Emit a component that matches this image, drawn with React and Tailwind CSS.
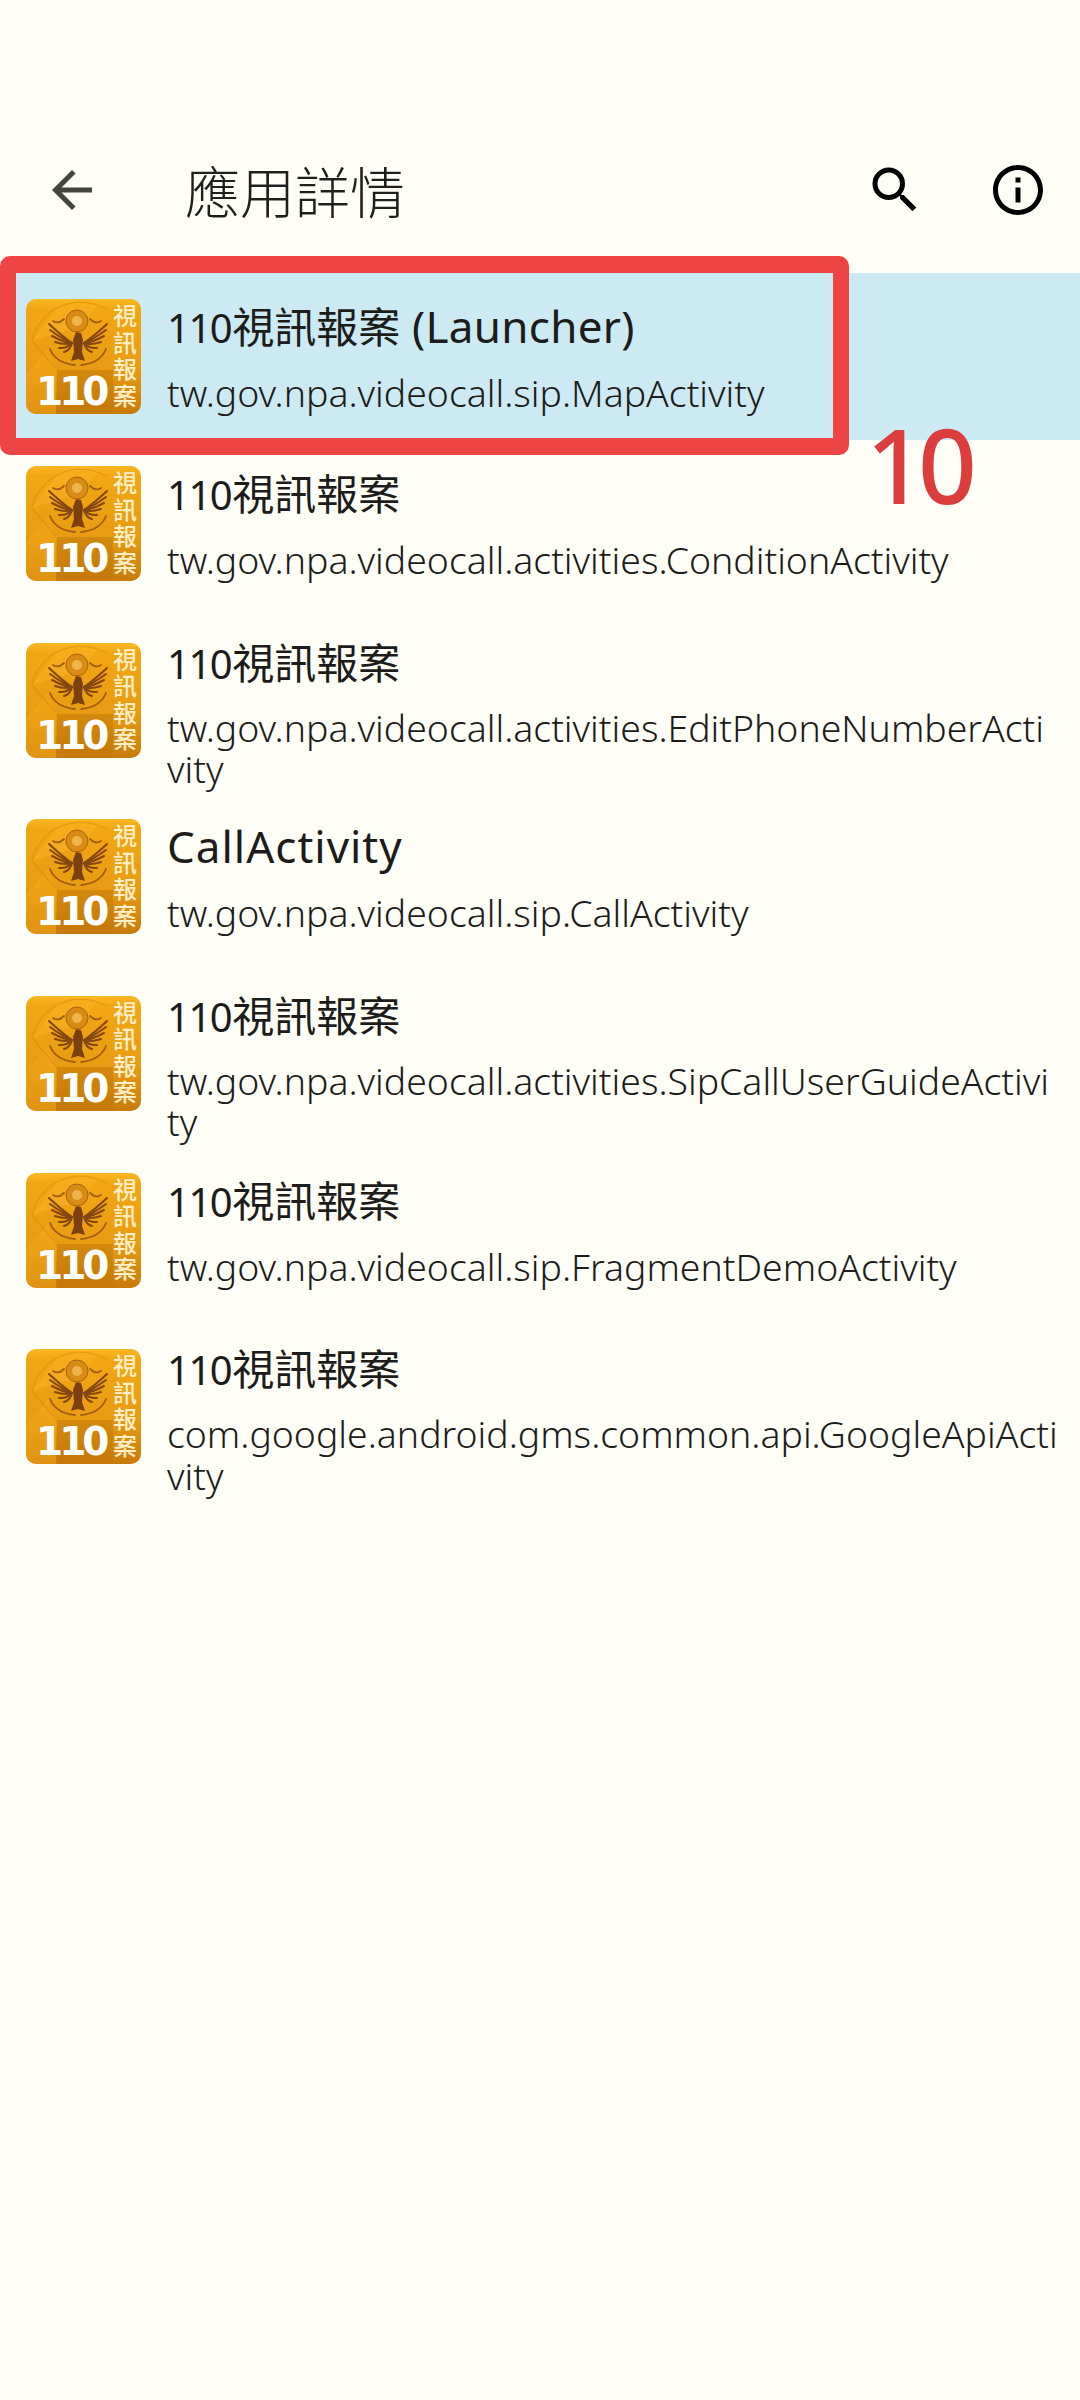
const rows = [
  { name: '視訊報案', suffix: ' (Launcher)', sub: 'tw.gov.npa.videocall.sip.MapActivity', active: true },
  { name: '視訊報案', sub: 'tw.gov.npa.videocall.activities.ConditionActivity' },
  { name: '視訊報案', sub: 'tw.gov.npa.videocall.activities.EditPhoneNumberActivity', wrapped: true },
  { label: 'CallActivity', sub: 'tw.gov.npa.videocall.sip.CallActivity' },
  { name: '視訊報案', sub: 'tw.gov.npa.videocall.activities.SipCallUserGuideActivity', wrapped: true },
  { name: '視訊報案', sub: 'tw.gov.npa.videocall.sip.FragmentDemoActivity' },
  { name: '視訊報案', sub: 'com.google.android.gms.common.api.GoogleApiActivity', wrapped: true },
];

// wing feathers, as [tip x, tip y] from the shoulder of the left wing
const feathers = [
  [23, 25],
  [24, 31],
  [26, 37],
  [29, 43],
  [33, 49],
  [38, 53],
];

function AppIcon() {
  return (
    <div className="relative mt-[26px] h-[115px] w-[115px] shrink-0">
      <svg viewBox="0 0 115 115" className="absolute inset-0 h-full w-full rounded-[10px]">
        <defs>
          <linearGradient id="iconBg" x1="0" y1="0" x2="0" y2="1">
            <stop offset="0" stopColor="#fbb822" />
            <stop offset="0.08" stopColor="#f1a713" />
            <stop offset="0.6" stopColor="#e89c12" />
            <stop offset="1" stopColor="#c97b0a" />
          </linearGradient>
        </defs>
        <rect width="115" height="115" fill="url(#iconBg)" />
        <path d="M6 42 L32 8 L72 6 L50 30 L24 36Z" fill="#f7b126" opacity="0.55" />
        <path d="M0 76 L22 50 L30 70 L30 115 L0 115Z" fill="#f2a81a" opacity="0.55" />
        <path d="M6 42 A50 50 0 0 1 80 10" fill="none" stroke="#d88c0c" strokeWidth="1.2" opacity="0.6" />
        <path d="M6 42 L30 70" stroke="#d88c0c" strokeWidth="1.2" opacity="0.6" />
        <rect x="31" y="71" width="56" height="44" fill="#bf7808" opacity="0.5" />
        <circle cx="51" cy="22" r="11" fill="#d78c14" stroke="#a8650e" strokeWidth="1" />
        <circle cx="51" cy="22" r="5" fill="#eeb54a" />
        <g stroke="#85460f" strokeWidth="2" strokeLinecap="round" fill="none">
          {feathers.map(([x, y]) => (
            <g key={y}>
              <path d={`M46 44 Q${(x + 46) / 2 + 2} ${(y + 44) / 2 + 3} ${x} ${y}`} />
              <path d={`M58 44 Q${(104 - x + 58) / 2 - 2} ${(y + 44) / 2 + 3} ${104 - x} ${y}`} />
            </g>
          ))}
        </g>
        <path d="M50 33 L55 34 L57 41 L56 53 L59 62 L52 60 L45 62 L48 53 L47 41Z" fill="#7c3f0d" />
        <g fill="none" stroke="#a0600f" strokeWidth="1.8" strokeLinecap="round">
          <path d="M38 20 C34 24 30 24 27 22" />
          <path d="M64 20 C68 24 72 24 75 22" />
          <path d="M24 50 C28 60 38 65 49 66" />
          <path d="M80 50 C76 60 66 65 55 66" />
        </g>
      </svg>
      <div className="relative flex h-full items-end justify-between pr-[3px] pb-[4px] pl-[10px]">
        <span className="font-['DejaVu_Sans',sans-serif] text-[39px] leading-[36px] font-bold tracking-[-4px] text-white">
          110
        </span>
        <span className="w-[26px] self-start pt-[3px] text-center font-['Noto_Sans_CJK_TC',sans-serif] text-[24px] leading-[26.5px] font-medium break-all text-[#ffeec6]">
          視訊報案
        </span>
      </div>
    </div>
  );
}

function Row({ name, suffix, label, sub, active, wrapped }) {
  return (
    <div className={`flex gap-[26px] pr-[20px] pl-[26px] ${active ? 'h-[167px] bg-[#cbeaf4]' : 'h-[176.67px]'}`}>
      <AppIcon />
      <div className={`min-w-0 flex-1 ${wrapped ? 'pt-[21px]' : 'pt-[29px]'}`}>
        <div className="h-[48px] text-[44px] leading-[48px] tracking-[0.3px] whitespace-pre text-[#1c1c1a]">
          {label ? (
            <span className="tracking-[1px]">{label}</span>
          ) : (
            <>
              <span className="text-[40px] tracking-[-1.5px]">110</span>
              <span className="pl-[1px] text-[42px] tracking-normal">{name}</span>
              {suffix}
            </>
          )}
        </div>
        <div className={`${wrapped ? 'mt-[21px]' : 'mt-[22px]'} text-[37.4px] leading-[41.5px] font-light break-all text-[#1c1c1a]`}>{sub}</div>
      </div>
    </div>
  );
}

export default function App() {
  return (
    <div className="relative min-h-[2400px] w-[1080px] bg-[#fffef7] font-['Noto_Sans','Noto_Sans_CJK_TC',sans-serif]">
      <div className="h-[273px] pt-[160px]">
        <div className="flex h-[60px] items-center pr-[32px] pl-[42px]">
          <svg viewBox="0 0 24 24" fill="#444440" className="h-[60px] w-[60px] shrink-0">
            <path d="M20 11H7.83l5.59-5.59L12 4l-8 8 8 8 1.41-1.41L7.83 13H20v-2z" />
          </svg>
          <div className="flex-1 pb-[2px] pl-[83px] font-['Noto_Sans_CJK_TC',sans-serif] text-[55px] leading-[64px] font-light text-[#1f1f1d]">
            應用詳情
          </div>
          <div className="flex gap-[63px]">
            <svg viewBox="0 0 24 24" fill="#000" className="h-[60px] w-[60px] shrink-0">
              <path d="M15.5 14h-.79l-.28-.27A6.471 6.471 0 0 0 16 9.5 6.5 6.5 0 1 0 9.5 16c1.61 0 3.09-.59 4.23-1.57l.27.28v.79l5 4.99L20.49 19l-4.99-5zm-6 0C7.01 14 5 11.99 5 9.5S7.01 5 9.5 5 14 7.01 14 9.5 11.99 14 9.5 14z" />
            </svg>
            <svg viewBox="0 0 24 24" fill="#000" className="h-[60px] w-[60px] shrink-0">
              <path d="M11 7h2v2h-2zm0 4h2v6h-2zm1-9C6.48 2 2 6.48 2 12s4.48 10 10 10 10-4.48 10-10S17.52 2 12 2zm0 18c-4.41 0-8-3.59-8-8s3.59-8 8-8 8 3.59 8 8-3.59 8-8 8z" />
            </svg>
          </div>
        </div>
      </div>

      {rows.map((row, i) => (
        <Row key={i} {...row} />
      ))}

      {/* red annotation over the first row */}
      <div className="absolute top-[256px] left-0 h-[199px] w-[849px] rounded-[10px] border-x-[16px] border-y-[17px] border-[#ef4444]" />
      <div className="absolute top-[404px] left-[866px] font-['Noto_Sans',sans-serif] text-[103px] leading-[120px] font-medium tracking-[-7px] text-[#dc3e3e] blur-[0.6px]">
        10
      </div>
    </div>
  );
}
